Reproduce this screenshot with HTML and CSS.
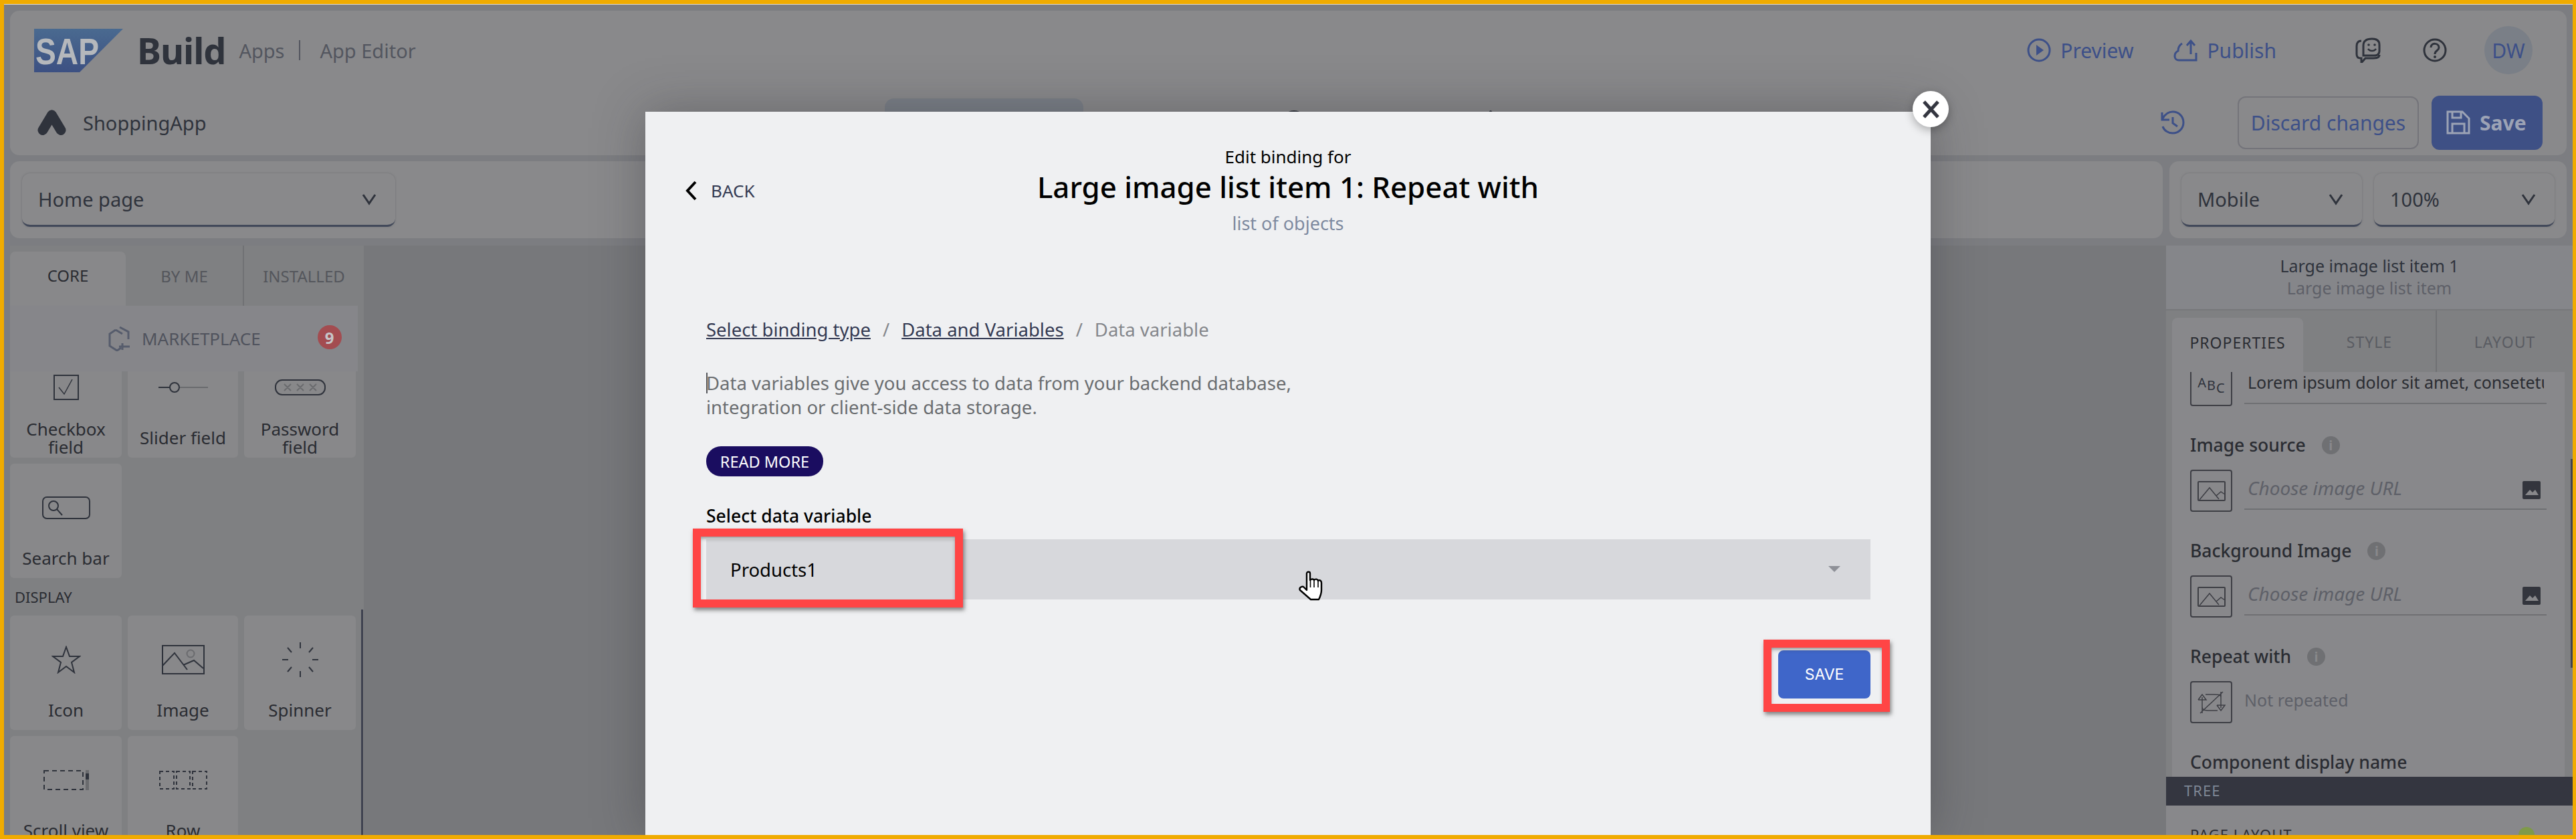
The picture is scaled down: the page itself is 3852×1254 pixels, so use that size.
FILE: index.html
```html
<!DOCTYPE html>
<html lang="en">
<head>
    <meta charset="UTF-8">
    <title>SAP Build Apps - App Editor</title>
    <link rel="stylesheet" href="styles.css">
</head>
<body>
    <div id="app">
        <header class="top">
            <div class="top-row">
                <svg class="sap-logo" viewBox="0 0 133 65" width="133" height="65">
                    <defs>
                        <linearGradient id="sapBlue" x1="0" y1="0" x2="0" y2="1">
                            <stop offset="0" stop-color="#4a6a90"/>
                            <stop offset="1" stop-color="#3c5082"/>
                        </linearGradient>
                    </defs>
                    <path d="M0 0H133L68 65H0Z" fill="url(#sapBlue)"/>
                    <text x="2" y="53" class="sap-logo-text" textLength="95" lengthAdjust="spacingAndGlyphs">SAP</text>
                </svg>
                <span class="brand">Build</span>
                <span class="crumb">Apps</span>
                <span class="crumb-sep"></span>
                <span class="crumb">App Editor</span>
                <div class="top-actions">
                    <span class="top-link">
                        <svg viewBox="0 0 36 36" width="36" height="36"><circle cx="18" cy="18" r="16" fill="none" stroke="#3d5088" stroke-width="3"/><path d="M14 10L25 18L14 26Z" fill="#3d5088"/></svg>
                        Preview
                    </span>
                    <span class="top-link publish">
                        <svg viewBox="0 0 36 36" width="36" height="36"><path d="M13 8C8 11 7 16 7 19C3 21 2 24 2 27C2 31 5 33 8 33H34V22M26 24V5M20 11L26 4L32 11" fill="none" stroke="#3d5088" stroke-width="3"/></svg>
                        Publish
                    </span>
                    <svg class="round-icon feedback" viewBox="0 0 38 38" width="38" height="38"><path d="M9 5C3 5 2 9 2 13V25C2 29 4 31 8 31H9V38L15 31H27C33 31 36 29 36 26M12 27H28C33 27 36 25 36 20V11C36 5 32 2 25 2C17 2 12 5 12 12Z" fill="none" stroke="#2f333c" stroke-width="3"/><circle cx="20" cy="11" r="1.8" fill="#2f333c"/><circle cx="29" cy="11" r="1.8" fill="#2f333c"/><path d="M19 17C22 21 28 21 31 17" fill="none" stroke="#2f333c" stroke-width="2.5"/></svg>
                    <svg class="round-icon help" viewBox="0 0 36 36" width="36" height="36"><circle cx="18" cy="18" r="16" fill="none" stroke="#2f333c" stroke-width="3"/><path d="M12 14C12 6 24 7 24 14C24 19 18 18 18 24" fill="none" stroke="#2f333c" stroke-width="3"/><circle cx="18" cy="28" r="2" fill="#2f333c"/></svg>
                    <span class="avatar">DW</span>
                </div>
            </div>
            <div class="top-row second">
                <svg class="app-mark" viewBox="0 0 43 38" width="43" height="38"><path d="M21.5 8L8 30.5M21.5 8L35 30.5" fill="none" stroke="#2f333c" stroke-width="15" stroke-linecap="round"/></svg>
                <span class="app-name">ShoppingApp</span>
                <div class="view-tabs">
                    <span class="view-pill"></span>
                    <span class="view-dot"></span>
                    <span class="view-dot small"></span>
                </div>
                <div class="top-actions">
                    <svg class="history" viewBox="0 0 38 36" width="38" height="36"><path d="M3 3V14H14M4 12C8 5 13 2 19 2C28 2 35 9 35 18C35 27 28 34 19 34C12 34 6 30 4 24" fill="none" stroke="#3d5088" stroke-width="3"/><path d="M19 10V19L26 24" fill="none" stroke="#3d5088" stroke-width="3"/></svg>
                    <span class="btn-discard">Discard changes</span>
                    <span class="btn-save">
                        <svg viewBox="0 0 36 36" width="36" height="36"><path d="M2 2H24L34 12V34H2Z M9 2V11H22V2 M9 34V20H27V34" fill="none" stroke="#9ca3b5" stroke-width="3"/></svg>
                        Save
                    </span>
                </div>
            </div>
        </header>

        <div class="toolbar">
            <div class="toolbar-card grow">
                <div class="select page-select"><span>Home page</span><svg viewBox="0 0 22 18" width="22" height="18"><path d="M2 2L11 15L20 2" fill="none" stroke="#2f333c" stroke-width="3"/></svg></div>
            </div>
            <div class="toolbar-card device">
                <div class="select"><span>Mobile</span><svg viewBox="0 0 22 18" width="22" height="18"><path d="M2 2L11 15L20 2" fill="none" stroke="#2f333c" stroke-width="3"/></svg></div>
                <div class="select"><span>100%</span><svg viewBox="0 0 22 18" width="22" height="18"><path d="M2 2L11 15L20 2" fill="none" stroke="#2f333c" stroke-width="3"/></svg></div>
            </div>
        </div>

        <div class="workspace">
            <aside class="palette">
                <div class="palette-tabs">
                    <span class="palette-tab active">CORE</span>
                    <span class="palette-tab">BY ME</span>
                    <span class="palette-tab split">INSTALLED</span>
                </div>
                <div class="marketplace">
                    <svg viewBox="0 0 34 38" width="34" height="38"><path d="M18 2L31 9V20M20 33L14 37L3 30V12L12 6M12 6L22 12M22 26V36M17 31H33" fill="none" stroke="#565c6c" stroke-width="3"/></svg>
                    <span class="marketplace-label">MARKETPLACE</span>
                    <span class="badge">9</span>
                </div>
                <div class="tiles">
                    <div class="tile">
                        <div class="tile-icon"><svg viewBox="0 0 38 38" width="38" height="38"><rect x="1" y="1" width="36" height="36" fill="none" stroke="#2f333c" stroke-width="2"/><path d="M8 19L16 29L28 7" fill="none" stroke="#2f333c" stroke-width="1.5"/></svg></div>
                        <div class="tile-label">Checkbox<br>field</div>
                    </div>
                    <div class="tile">
                        <div class="tile-icon"><svg viewBox="0 0 74 20" width="74" height="20"><path d="M0 10H17" stroke="#2f333c" stroke-width="2"/><path d="M31 10H74" stroke="#6a6b6e" stroke-width="2"/><circle cx="24" cy="10" r="7" fill="none" stroke="#2f333c" stroke-width="2"/></svg></div>
                        <div class="tile-label">Slider field</div>
                    </div>
                    <div class="tile">
                        <div class="tile-icon"><svg viewBox="0 0 76 24" width="76" height="24"><rect x="1" y="1" width="74" height="22" rx="10" fill="none" stroke="#2f333c" stroke-width="2"/><path d="M14 7L24 17M24 7L14 17M33 7L43 17M43 7L33 17M52 7L62 17M62 7L52 17" stroke="#6a6b6e" stroke-width="2"/></svg></div>
                        <div class="tile-label">Password<br>field</div>
                    </div>
                    <div class="tile">
                        <div class="tile-icon"><svg viewBox="0 0 72 34" width="72" height="34"><rect x="1" y="1" width="70" height="32" rx="6" fill="none" stroke="#2f333c" stroke-width="2"/><circle cx="17" cy="14" r="7" fill="none" stroke="#2f333c" stroke-width="2"/><path d="M22 19L30 28" stroke="#2f333c" stroke-width="2"/></svg></div>
                        <div class="tile-label">Search bar</div>
                    </div>
                    <div class="section-title">DISPLAY</div>
                    <div class="tile">
                        <div class="tile-icon"><svg viewBox="0 0 44 42" width="44" height="42"><path d="M22 2L27 16H42L30 25L34 40L22 31L10 40L14 25L2 16H17Z" fill="none" stroke="#2f333c" stroke-width="2"/></svg></div>
                        <div class="tile-label">Icon</div>
                    </div>
                    <div class="tile">
                        <div class="tile-icon"><svg viewBox="0 0 64 44" width="64" height="44"><rect x="1" y="1" width="62" height="42" fill="none" stroke="#2f333c" stroke-width="2"/><path d="M1 31L19 12L38 37M32 30L48 23L62 35" fill="none" stroke="#2f333c" stroke-width="2"/><circle cx="43" cy="13" r="5.5" fill="none" stroke="#6a6b6e" stroke-width="2"/></svg></div>
                        <div class="tile-label">Image</div>
                    </div>
                    <div class="tile">
                        <div class="tile-icon"><svg viewBox="0 0 54 52" width="54" height="52"><path d="M27 0V9M27 43V52M0 26H9M45 26H54M8 8L14 15M46 8L40 15M8 44L14 37M46 44L40 37" stroke="#2f333c" stroke-width="2"/></svg></div>
                        <div class="tile-label">Spinner</div>
                    </div>
                    <div class="tile">
                        <div class="tile-icon"><svg viewBox="0 0 68 30" width="68" height="30"><rect x="1" y="1" width="58" height="28" fill="none" stroke="#2f333c" stroke-width="2" stroke-dasharray="7 5"/><rect x="63" y="0" width="5" height="30" fill="#6a6b6e"/><rect x="63" y="5" width="5" height="9" fill="#2f333c"/></svg></div>
                        <div class="tile-label">Scroll view</div>
                    </div>
                    <div class="tile">
                        <div class="tile-icon"><svg viewBox="0 0 72 28" width="72" height="28"><g fill="none" stroke="#2f333c" stroke-width="2" stroke-dasharray="5 4"><rect x="1" y="1" width="21" height="26"/><rect x="26" y="1" width="20" height="26"/><rect x="50" y="1" width="21" height="26"/></g></svg></div>
                        <div class="tile-label">Row</div>
                    </div>
                </div>
                <span class="palette-scroll"></span>
            </aside>

            <main class="canvas"></main>

            <aside class="inspector">
                <div class="inspector-head">
                    <div class="inspector-name">Large image list item 1</div>
                    <div class="inspector-type">Large image list item</div>
                </div>
                <div class="inspector-tabs">
                    <span class="inspector-tab active">PROPERTIES</span>
                    <span class="inspector-tab">STYLE</span>
                    <span class="inspector-tab split">LAYOUT</span>
                </div>
                <div class="inspector-body">
                    <div class="field first">
                        <span class="field-box"><span class="abc"><i>A</i><i>B</i><i>C</i></span></span>
                        <span class="field-input value"><span class="value-text">Lorem ipsum dolor sit amet, consetetur sadipscing</span></span>
                    </div>
                    <div class="field-label">Image source <span class="info">i</span></div>
                    <div class="field">
                        <span class="field-box"><svg viewBox="0 0 42 30" width="42" height="30"><rect x="1" y="1" width="40" height="28" rx="1" fill="none" stroke="#3e3f45" stroke-width="2"/><path d="M3 28L18 10L32 27M28 22L35 16L41 20" fill="none" stroke="#3e3f45" stroke-width="1.5"/></svg></span>
                        <span class="field-input placeholder">Choose image URL<svg viewBox="0 0 27 27" width="27" height="27"><rect width="27" height="27" rx="2" fill="#33353d"/><path d="M4 21L11 13L15 17L19 13L24 21Z" fill="#88888b"/></svg></span>
                    </div>
                    <div class="field-label">Background Image <span class="info">i</span></div>
                    <div class="field">
                        <span class="field-box"><svg viewBox="0 0 42 30" width="42" height="30"><rect x="1" y="1" width="40" height="28" rx="1" fill="none" stroke="#3e3f45" stroke-width="2"/><path d="M3 28L18 10L32 27M28 22L35 16L41 20" fill="none" stroke="#3e3f45" stroke-width="1.5"/></svg></span>
                        <span class="field-input placeholder">Choose image URL<svg viewBox="0 0 27 27" width="27" height="27"><rect width="27" height="27" rx="2" fill="#33353d"/><path d="M4 21L11 13L15 17L19 13L24 21Z" fill="#88888b"/></svg></span>
                    </div>
                    <div class="field-label">Repeat with <span class="info">i</span></div>
                    <div class="field">
                        <span class="field-box"><svg viewBox="0 0 42 36" width="42" height="36"><path d="M7 34V10M1 14L7 6L13 14H1M35 2V26M29 22L35 30L41 22H29M7 24C7 30 12 30 18 30H30M35 10C35 6 30 6 24 6H12M4 34L38 2" fill="none" stroke="#3e3f45" stroke-width="1.5"/></svg></span>
                        <span class="not-repeated">Not repeated</span>
                    </div>
                    <div class="field-label">Component display name</div>
                </div>
                <div class="tree-bar">TREE</div>
                <div class="tree-row"><span>PAGE LAYOUT</span><span class="tree-dot"></span></div>
                <span class="inspector-scroll"></span>
            </aside>
        </div>
    </div>

    <div class="modal">
        <span class="modal-close"><svg viewBox="0 0 27 27" width="27" height="27"><path d="M3 2L24 25M24 2L3 25" stroke="#343640" stroke-width="5"/></svg></span>
        <div class="modal-head">
            <span class="back"><svg viewBox="0 0 20 30" width="20" height="30"><path d="M17 2L5 15L17 28" fill="none" stroke="#000" stroke-width="4"/></svg>BACK</span>
            <div class="modal-kicker">Edit binding for</div>
            <h1 class="modal-title">Large image list item 1: Repeat with</h1>
            <div class="modal-type">list of objects</div>
        </div>
        <div class="modal-body">
            <nav class="path">
                <a>Select binding type</a><span class="path-sep">/</span><a>Data and Variables</a><span class="path-sep">/</span><span class="path-here">Data variable</span>
            </nav>
            <p class="intro">Data variables give you access to data from your backend database,<br>integration or client-side data storage.</p>
            <span class="read-more">READ MORE</span>
            <div class="var-label">Select data variable</div>
            <div class="var-select">
                <span>Products1</span>
                <span class="caret"></span>
                <svg class="hand" viewBox="-1 -1 36 46" width="36" height="46"><path d="M11 3C11 0 16 0 16 3V13C18 11 21 11 22 13C24 11 27 11 28 14C30 12 33 14 33 17V28C33 34 31 38 29 42H17L1 28C-1 25 3 22 6 23L11 28Z" fill="#fff" stroke="#000" stroke-width="2.4" stroke-linejoin="round"/><path d="M16.5 13V24M22 13V24M28 14V24" stroke="#000" stroke-width="1.6"/></svg>
            </div>
            <div class="modal-foot"><span class="btn-primary">SAVE</span></div>
        </div>
    </div>

    <span class="callout callout-select"></span>
    <span class="callout callout-save"></span>
</body>
</html>
```

FILE: styles.css
```css
html, body {
    margin: 0;
    padding: 0;
}
body {
    position: relative;
    box-sizing: border-box;
    width: 3852px;
    height: 1254px;
    overflow: hidden;
    border: solid #f0ab00;
    border-width: 6px 5px 6px 6px;
    background: #7c7d81;
    font-family: "Noto Sans", sans-serif;
    color: #2f333c;
}
#app {
    display: flex;
    flex-direction: column;
    height: 100%;
    border-top: 1px solid #d8d8d8;
    box-sizing: border-box;
}

/* header */
.top {
    margin: 9px 9px 0;
    height: 216px;
    flex: none;
    border-radius: 14px;
    background: #89898b;
}
.top-row {
    display: flex;
    align-items: center;
    height: 118px;
    padding: 0 51px 0 36px;
}
.top-row.second {
    height: 98px;
    padding: 0 36px 0 41px;
}
.sap-logo-text {
    font-family: "Liberation Sans", sans-serif;
    font-size: 56px;
    font-weight: bold;
    fill: #b5b8bc;
}
.brand {
    margin-left: 21px;
    font-size: 54px;
    font-weight: 700;
    letter-spacing: -1px;
    color: #2f333c;
}
.crumb {
    margin-left: 20px;
    font-size: 29px;
    color: #53565f;
}
.crumb-sep {
    width: 2px;
    height: 30px;
    margin-left: 22px;
    margin-right: 9px;
    background: #53565f;
}
.top-actions {
    display: flex;
    align-items: center;
    margin-left: auto;
}
.top-link {
    display: flex;
    align-items: center;
    gap: 14px;
    font-size: 30px;
    color: #3d5088;
}
.top-link.publish {
    margin-left: 60px;
}
.feedback {
    margin-left: 118px;
}
.help {
    margin-left: 63px;
}
.avatar {
    display: flex;
    align-items: center;
    justify-content: center;
    width: 72px;
    height: 72px;
    margin-left: 56px;
    border-radius: 50%;
    background: #7a7f87;
    font-size: 30px;
    color: #3d5088;
}
.app-name {
    margin-left: 25px;
    font-size: 29px;
    color: #2f333c;
}
.view-tabs {
    display: flex;
    align-self: flex-start;
    margin-left: 1014px;
}
.view-pill {
    width: 297px;
    height: 73px;
    margin-top: 13px;
    border-radius: 14px;
    background: #7a7f87;
}
.view-dot {
    width: 22px;
    height: 12px;
    margin: 31px 0 0 304px;
    border-radius: 50%;
    background: #2f333c;
}
.view-dot.small {
    width: 6px;
    margin-left: 280px;
}
.history {
    margin-right: 78px;
}
.btn-discard {
    display: flex;
    align-items: center;
    justify-content: center;
    box-sizing: border-box;
    width: 271px;
    height: 79px;
    border: 2px solid #74747a;
    border-radius: 12px;
    font-size: 30px;
    color: #3d5088;
}
.btn-save {
    display: flex;
    align-items: center;
    gap: 14px;
    box-sizing: border-box;
    width: 166px;
    height: 81px;
    margin-left: 19px;
    padding-left: 22px;
    border-radius: 12px;
    background: #3e5085;
    font-size: 30px;
    font-weight: 700;
    color: #9ca3b5;
}

/* second bar */
.toolbar {
    display: flex;
    flex: none;
    gap: 10px;
    margin: 9px 9px 0;
    height: 115px;
}
.toolbar-card {
    display: flex;
    gap: 18px;
    padding: 18px;
    box-sizing: border-box;
    border-radius: 14px;
    background: #89898b;
}
.toolbar-card.grow {
    flex: 1;
}
.toolbar-card.device {
    width: 594px;
}
.select {
    display: flex;
    align-items: center;
    justify-content: space-between;
    box-sizing: border-box;
    width: 271px;
    height: 80px;
    padding: 0 28px 0 24px;
    border-radius: 12px;
    border-bottom: 3px solid #42495a;
    box-shadow: 0 0 3px #6f7073;
    font-size: 29px;
    color: #2f333c;
}
.page-select {
    width: 558px;
}

/* main area */
.workspace {
    display: flex;
    flex: 1;
    min-height: 0;
    margin-top: 11px;
}
.palette {
    position: relative;
    flex: none;
    width: 529px;
    margin-left: 9px;
    background: #7f8082;
    overflow: hidden;
}
.palette-tabs {
    display: flex;
    height: 90px;
}
.palette-tab {
    display: flex;
    align-items: center;
    justify-content: center;
    box-sizing: border-box;
    width: 175px;
    height: 90px;
    font-size: 24px;
    color: #54565c;
}
.palette-tab.active {
    width: 173px;
    margin-top: 9px;
    height: 81px;
    padding-bottom: 10px;
    border-radius: 8px 8px 0 0;
    background: #88888a;
    color: #2a2c32;
}
.palette-tab.split {
    width: 181px;
    border-left: 2px solid #707174;
}
.marketplace {
    position: relative;
    z-index: 1;
    display: flex;
    align-items: center;
    box-sizing: border-box;
    width: 520px;
    height: 98px;
    padding-left: 146px;
    background: #86868a;
}
.marketplace-label {
    margin-left: 17px;
    font-size: 26px;
    color: #50535d;
}
.badge {
    display: flex;
    align-items: center;
    justify-content: center;
    width: 36px;
    height: 36px;
    margin: -4px 0 0 85px;
    border-radius: 50%;
    background: #a34c50;
    font-size: 24px;
    font-weight: 700;
    color: #c6c6c8;
}
.tiles {
    display: grid;
    grid-template-columns: 167px 165px 167px;
    grid-template-rows: 171px 171px 38px 171px 171px;
    gap: 9px;
    margin-top: -42px;
}
.tile {
    display: flex;
    flex-direction: column;
    border-radius: 6px;
    background: #88888a;
}
.tile-icon {
    display: flex;
    align-items: center;
    justify-content: center;
    box-sizing: border-box;
    height: 112px;
    padding-top: 20px;
}
.tile-label {
    display: flex;
    align-items: center;
    justify-content: center;
    height: 59px;
    font-size: 26px;
    line-height: 27px;
    text-align: center;
    color: #2a2c32;
}
.section-title {
    grid-column: 1 / -1;
    display: flex;
    align-items: center;
    padding-left: 7px;
    font-size: 22px;
    color: #2a2c32;
}
.palette-scroll {
    position: absolute;
    top: 544px;
    right: 1px;
    width: 3px;
    height: 340px;
    background: #3f4250;
}
.canvas {
    flex: 1;
    background: #77787b;
}
.inspector {
    position: relative;
    display: flex;
    flex: none;
    flex-direction: column;
    width: 608px;
    background: #7f8082;
    overflow: hidden;
}
.inspector-head {
    flex: none;
    height: 97px;
    padding-top: 14px;
    box-sizing: border-box;
    border-bottom: 2px solid #76777a;
    background: #85868a;
    text-align: center;
    font-size: 25px;
    line-height: 33px;
}
.inspector-type {
    color: #5e6068;
}
.inspector-tabs {
    display: flex;
    flex: none;
    height: 92px;
    padding-left: 9px;
}
.inspector-tab {
    display: flex;
    align-items: center;
    justify-content: center;
    box-sizing: border-box;
    width: 198px;
    padding-top: 2px;
    font-size: 23px;
    letter-spacing: 1px;
    color: #5a5c62;
}
.inspector-tab.active {
    width: 196px;
    margin-top: 11px;
    padding: 0 0 8px;
    border-radius: 8px 8px 0 0;
    background: #88888b;
    color: #2a2c32;
}
.inspector-tab.split {
    flex: 1;
    border-left: 2px solid #707174;
}
.inspector-body {
    flex: 1;
    min-height: 0;
    overflow: hidden;
    margin: 0 12px 0 9px;
    padding-left: 27px;
    background: #88888b;
}
.field {
    display: flex;
}
.field.first {
    margin-top: -12px;
}
.field-box {
    display: flex;
    flex: none;
    align-items: center;
    justify-content: center;
    box-sizing: border-box;
    width: 63px;
    height: 63px;
    border: 2px solid #3e3f45;
    border-radius: 4px;
}
.abc {
    display: flex;
    align-items: center;
    gap: 1px;
    font-size: 20px;
    line-height: 20px;
}
.abc i {
    font-style: normal;
}
.abc i:first-child {
    margin-top: -8px;
}
.abc i:last-child {
    margin-top: 8px;
}
.field-input {
    display: flex;
    align-items: flex-start;
    justify-content: space-between;
    box-sizing: border-box;
    width: 452px;
    height: 60px;
    margin-left: 18px;
    padding: 9px 4px 0 5px;
    border-bottom: 2px solid #6f7073;
    font-size: 25px;
    line-height: 36px;
    white-space: nowrap;
}
.field-input svg {
    flex: none;
    margin: 8px 5px 0 0;
}
.value-text {
    display: block;
    overflow: hidden;
    color: #2a2c32;
}
.field-input.placeholder {
    font-size: 28px;
    font-style: italic;
    color: #5e6068;
}
.not-repeated {
    margin: 10px 0 0 18px;
    font-size: 25px;
    line-height: 36px;
    color: #5e6068;
}
.field-label {
    display: flex;
    align-items: center;
    gap: 24px;
    height: 40px;
    margin: 38px 0 17px;
    font-size: 26.5px;
    font-weight: 500;
    color: #2a2c32;
}
.info {
    display: flex;
    align-items: center;
    justify-content: center;
    width: 27px;
    height: 27px;
    border-radius: 50%;
    background: #6f7073;
    font-size: 20px;
    font-weight: 700;
    color: #88888b;
}
.tree-bar {
    flex: none;
    height: 43px;
    padding-left: 27px;
    background: #343640;
    font-size: 22px;
    line-height: 40px;
    letter-spacing: 1px;
    color: #7d8694;
}
.tree-row {
    display: flex;
    flex: none;
    justify-content: space-between;
    height: 44px;
    padding: 28px 57px 0 36px;
    box-sizing: border-box;
    background: #88888b;
    font-size: 22px;
    line-height: 30px;
    color: #2a2c32;
    letter-spacing: 1px;
}
.tree-dot {
    width: 24px;
    height: 24px;
    margin-top: 4px;
    border-radius: 50%;
    background: #7f9a4a;
}
.inspector-scroll {
    position: absolute;
    top: 319px;
    right: 0;
    width: 3px;
    height: 312px;
    background: #3f4250;
}

/* modal */
.modal {
    position: absolute;
    top: 161px;
    left: 959px;
    box-sizing: border-box;
    width: 1922px;
    height: 1081px;
    background: #eff0f2;
    box-shadow: 0 0 70px rgba(40, 40, 45, 0.35);
}
.modal-close {
    position: absolute;
    top: -31px;
    right: -27px;
    display: flex;
    align-items: center;
    justify-content: center;
    width: 54px;
    height: 54px;
    border-radius: 50%;
    background: #fff;
    box-shadow: 0 4px 14px rgba(0, 0, 0, 0.3);
}
.modal-head {
    position: relative;
    height: 240px;
    padding-top: 49px;
    box-sizing: border-box;
    text-align: center;
}
.back {
    position: absolute;
    top: 100px;
    left: 58px;
    display: flex;
    align-items: center;
    gap: 20px;
    font-size: 26px;
    color: #343a52;
}
.modal-kicker {
    font-size: 26px;
    line-height: 36px;
    color: #000;
}
.modal-title {
    margin: 0;
    font-size: 43.8px;
    font-weight: 500;
    line-height: 54px;
    color: #000;
}
.modal-type {
    margin-top: 10px;
    font-size: 27px;
    line-height: 36px;
    color: #7e8aa0;
}
.modal-body {
    padding: 66px 90px 0 91px;
}
.path {
    display: flex;
    font-size: 27.5px;
    line-height: 40px;
    color: #343a52;
}
.path a {
    text-decoration: underline;
}
.path-sep {
    margin: 0 18px;
    color: #85878c;
}
.path-here {
    color: #85878c;
}
.intro {
    position: relative;
    margin: 42px 0 0;
    font-size: 27.5px;
    line-height: 36px;
    color: #6a6d70;
}
.intro::before {
    content: "";
    position: absolute;
    top: 2px;
    left: 0;
    width: 2px;
    height: 31px;
    background: #55575c;
}
.read-more {
    display: flex;
    align-items: center;
    justify-content: center;
    width: 175px;
    height: 45px;
    margin-top: 40px;
    border-radius: 22px;
    background: #1a0d60;
    font-size: 23.5px;
    color: #fff;
}
.var-label {
    margin-top: 41px;
    font-size: 26.5px;
    font-weight: 500;
    line-height: 36px;
    color: #000;
}
.var-select {
    position: relative;
    display: flex;
    align-items: center;
    height: 90px;
    margin-top: 17px;
    padding-left: 36px;
    background: #d7d8dc;
    font-size: 27.5px;
    color: #000;
}
.caret {
    position: absolute;
    top: 40px;
    right: 45px;
    border: solid transparent;
    border-width: 9px 9px 0;
    border-top-color: #8e9097;
}
.hand {
    position: absolute;
    top: 47px;
    left: 886px;
}
.modal-foot {
    display: flex;
    justify-content: flex-end;
    margin-top: 76px;
}
.btn-primary {
    display: flex;
    align-items: center;
    justify-content: center;
    width: 138px;
    height: 72px;
    border-radius: 8px;
    background: #3f66c9;
    font-family: Inter, sans-serif;
    font-size: 23px;
    color: #fff;
}

/* red annotation boxes drawn over the screenshot */
.callout {
    position: absolute;
    box-sizing: border-box;
    border: 12px solid #ff4545;
    box-shadow: 2px 4px 6px rgba(60, 60, 60, 0.6), inset 0 4px 6px -2px rgba(60, 60, 60, 0.6);
}
.callout-select {
    top: 784px;
    left: 1030px;
    width: 404px;
    height: 118px;
}
.callout-save {
    top: 950px;
    left: 2631px;
    width: 189px;
    height: 108px;
}
```
